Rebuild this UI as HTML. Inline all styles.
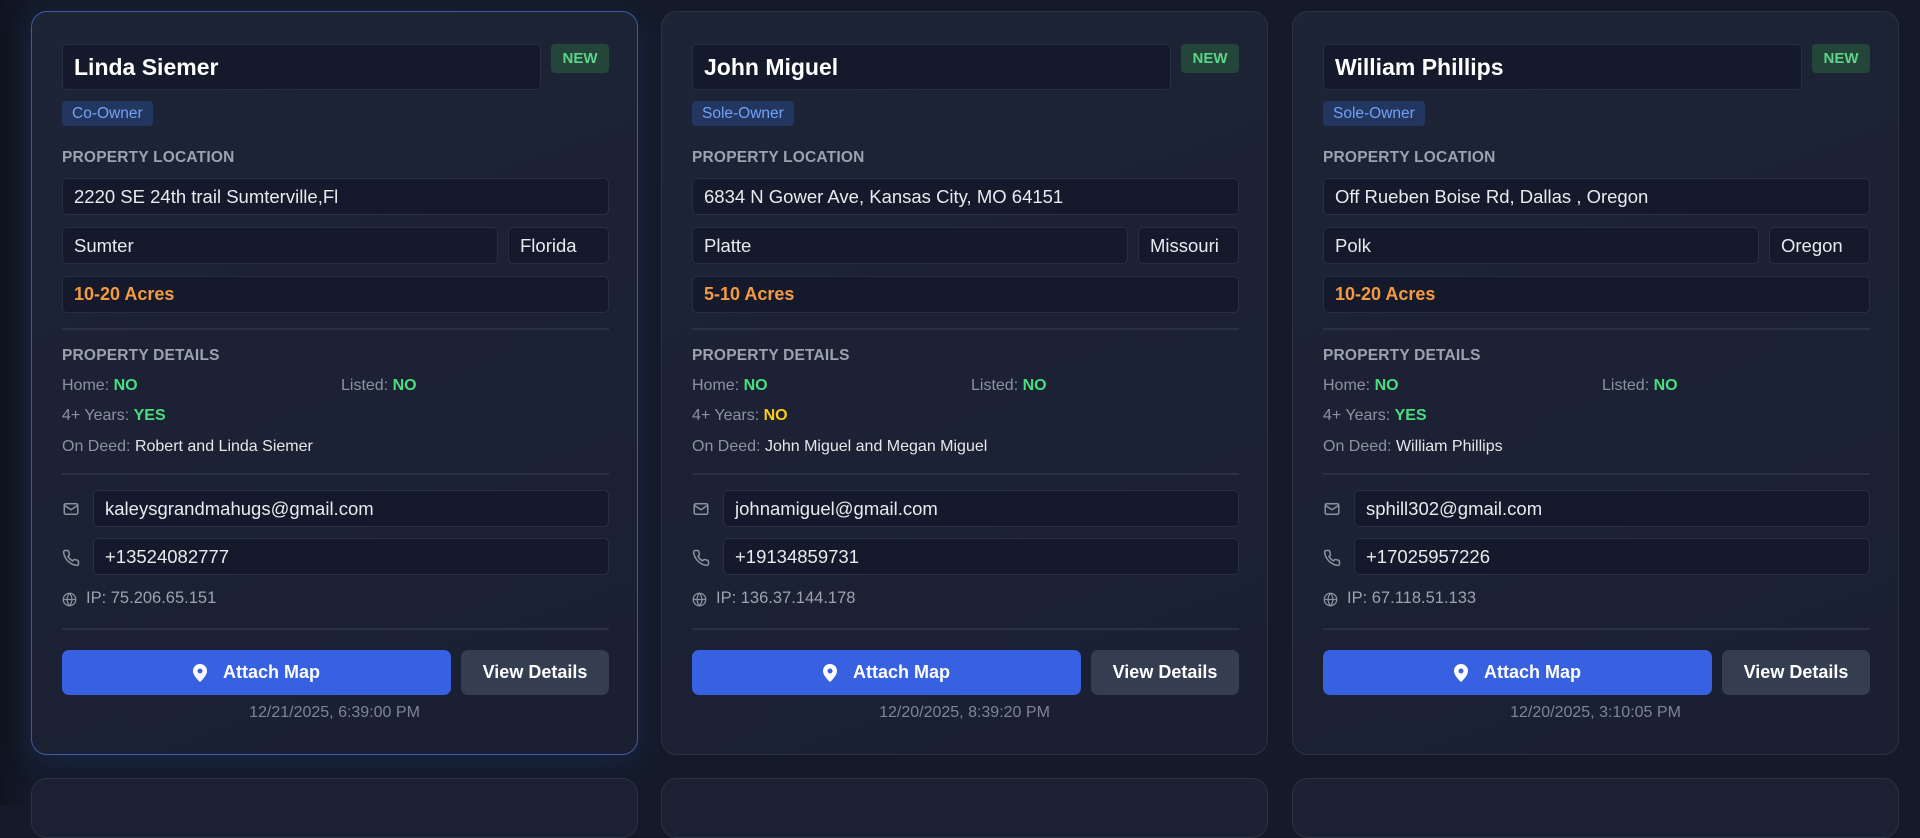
<!DOCTYPE html>
<html><head><meta charset="utf-8"><style>
*{box-sizing:border-box;margin:0;padding:0}
body{width:1920px;height:805px;overflow:hidden;background:#141a28;font-family:"Liberation Sans",sans-serif;color:#e5e7eb;position:relative}
.bgl{position:absolute;left:0;top:0;width:30px;height:805px;background:linear-gradient(90deg,#0f1420,#141a28)}
.card{position:absolute;top:11px;width:607px;height:744px;background:linear-gradient(160deg,#1d2436,#1a2031);border:1px solid #2a3243;border-radius:16px}
.card.sel{border-color:#3d5aa6;box-shadow:0 8px 30px rgba(40,70,150,.25)}
.card2{position:absolute;top:778px;width:607px;height:60px;background:#1b2132;border:1px solid #2a3243;border-radius:16px}
.in{position:absolute;background:#141a2b;border:1px solid #272f40;border-radius:5px;font-size:18.5px;color:#e8eaee;padding-left:11px;display:flex;align-items:center;white-space:nowrap}
.name{left:30px;top:32px;width:479px;height:46px;font-size:23px;font-weight:bold;color:#fff}
.new{position:absolute;left:519px;top:32px;width:58px;height:29px;background:#24463a;color:#5dd28a;font-weight:bold;font-size:15px;border-radius:4px;display:flex;align-items:center;justify-content:center}
.own{position:absolute;left:30px;top:89px;height:25px;padding:0 10px;background:#223660;color:#72a2f5;font-size:15.5px;border-radius:4px;display:flex;align-items:center}
.lbl{position:absolute;left:30px;font-size:15.5px;font-weight:bold;color:#9ca3af;letter-spacing:.2px}
.hr{position:absolute;left:30px;width:547px;height:2px;background:#293142}
.row{position:absolute;font-size:16px;color:#8b93a1}
.row b{color:#4ade80}
.row b.y{color:#facc15}
.row span{color:#e5e7eb}
.ico{position:absolute;left:30px}
.btn{position:absolute;top:638px;height:45px;border-radius:7px;font-weight:bold;font-size:18px;color:#fff;display:flex;align-items:center;justify-content:center}
.ts{position:absolute;left:0;width:605px;top:692px;text-align:center;font-size:16px;color:#7d8594}
</style></head><body>
<div class="bgl"></div>

<div class="card sel" style="left:31px">
<div class="in name">Linda Siemer</div><div class="new">NEW</div>
<div class="own">Co-Owner</div>
<div class="lbl" style="top:137px">PROPERTY LOCATION</div>
<div class="in" style="left:30px;top:166px;width:547px;height:37px">2220 SE 24th trail Sumterville,Fl</div>
<div class="in" style="left:30px;top:215px;width:436px;height:37px">Sumter</div>
<div class="in" style="left:476px;top:215px;width:101px;height:37px">Florida</div>
<div class="in" style="left:30px;top:264px;width:547px;height:37px;color:#f59a40;font-weight:bold;font-size:18px">10-20 Acres</div>
<div class="hr" style="top:316px"></div>
<div class="lbl" style="top:335px">PROPERTY DETAILS</div>
<div class="row" style="left:30px;top:365px">Home: <b>NO</b></div>
<div class="row" style="left:309px;top:365px">Listed: <b>NO</b></div>
<div class="row" style="left:30px;top:395px">4+ Years: <b>YES</b></div>
<div class="row" style="left:30px;top:426px">On Deed: <span>Robert and Linda Siemer</span></div>
<div class="hr" style="top:461px"></div>
<svg class="ico" style="top:488px" width="18" height="18" viewBox="0 0 24 24" fill="none" stroke="#8b93a1" stroke-width="2"><rect x="3" y="5" width="18" height="14" rx="2"/><path d="M3 7l9 6 9-6"/></svg>
<div class="in" style="left:61px;top:478px;width:516px;height:37px">kaleysgrandmahugs@gmail.com</div>
<svg class="ico" style="top:537px" width="18" height="18" viewBox="0 0 24 24" fill="none" stroke="#8b93a1" stroke-width="2"><path d="M22 16.9v3a2 2 0 0 1-2.2 2 19.8 19.8 0 0 1-8.6-3.1 19.5 19.5 0 0 1-6-6A19.8 19.8 0 0 1 2.1 4.2 2 2 0 0 1 4.1 2h3a2 2 0 0 1 2 1.7c.1.9.4 1.8.7 2.7a2 2 0 0 1-.5 2.1L8 9.8a16 16 0 0 0 6 6l1.3-1.3a2 2 0 0 1 2.1-.4c.9.3 1.8.6 2.7.7a2 2 0 0 1 1.7 2z"/></svg>
<div class="in" style="left:61px;top:526px;width:516px;height:37px">+13524082777</div>
<svg class="ico" style="top:580px" width="15" height="15" viewBox="0 0 24 24" fill="none" stroke="#8b93a1" stroke-width="2"><circle cx="12" cy="12" r="10"/><path d="M2 12h20M12 2a15 15 0 0 1 0 20M12 2a15 15 0 0 0 0 20"/></svg>
<div class="row" style="left:54px;top:577px;color:#9ca3af;font-size:16.5px">IP: 75.206.65.151</div>
<div class="hr" style="top:616px"></div>
<div class="btn" style="left:30px;width:389px;background:#3761e0"><svg width="14" height="18" viewBox="0 0 14 18" style="margin-right:16px"><path d="M7 0a7 7 0 0 0-7 7c0 5 7 11 7 11s7-6 7-11a7 7 0 0 0-7-7z" fill="#fff"/><circle cx="7" cy="7" r="2.5" fill="#3761e0"/></svg>Attach Map</div>
<div class="btn" style="left:429px;width:148px;background:#343e50">View Details</div>
<div class="ts">12/21/2025, 6:39:00 PM</div>
</div>

<div class="card" style="left:661px">
<div class="in name">John Miguel</div><div class="new">NEW</div>
<div class="own">Sole-Owner</div>
<div class="lbl" style="top:137px">PROPERTY LOCATION</div>
<div class="in" style="left:30px;top:166px;width:547px;height:37px">6834 N Gower Ave, Kansas City, MO 64151</div>
<div class="in" style="left:30px;top:215px;width:436px;height:37px">Platte</div>
<div class="in" style="left:476px;top:215px;width:101px;height:37px">Missouri</div>
<div class="in" style="left:30px;top:264px;width:547px;height:37px;color:#f59a40;font-weight:bold;font-size:18px">5-10 Acres</div>
<div class="hr" style="top:316px"></div>
<div class="lbl" style="top:335px">PROPERTY DETAILS</div>
<div class="row" style="left:30px;top:365px">Home: <b>NO</b></div>
<div class="row" style="left:309px;top:365px">Listed: <b>NO</b></div>
<div class="row" style="left:30px;top:395px">4+ Years: <b class="y">NO</b></div>
<div class="row" style="left:30px;top:426px">On Deed: <span>John Miguel and Megan Miguel</span></div>
<div class="hr" style="top:461px"></div>
<svg class="ico" style="top:488px" width="18" height="18" viewBox="0 0 24 24" fill="none" stroke="#8b93a1" stroke-width="2"><rect x="3" y="5" width="18" height="14" rx="2"/><path d="M3 7l9 6 9-6"/></svg>
<div class="in" style="left:61px;top:478px;width:516px;height:37px">johnamiguel@gmail.com</div>
<svg class="ico" style="top:537px" width="18" height="18" viewBox="0 0 24 24" fill="none" stroke="#8b93a1" stroke-width="2"><path d="M22 16.9v3a2 2 0 0 1-2.2 2 19.8 19.8 0 0 1-8.6-3.1 19.5 19.5 0 0 1-6-6A19.8 19.8 0 0 1 2.1 4.2 2 2 0 0 1 4.1 2h3a2 2 0 0 1 2 1.7c.1.9.4 1.8.7 2.7a2 2 0 0 1-.5 2.1L8 9.8a16 16 0 0 0 6 6l1.3-1.3a2 2 0 0 1 2.1-.4c.9.3 1.8.6 2.7.7a2 2 0 0 1 1.7 2z"/></svg>
<div class="in" style="left:61px;top:526px;width:516px;height:37px">+19134859731</div>
<svg class="ico" style="top:580px" width="15" height="15" viewBox="0 0 24 24" fill="none" stroke="#8b93a1" stroke-width="2"><circle cx="12" cy="12" r="10"/><path d="M2 12h20M12 2a15 15 0 0 1 0 20M12 2a15 15 0 0 0 0 20"/></svg>
<div class="row" style="left:54px;top:577px;color:#9ca3af;font-size:16.5px">IP: 136.37.144.178</div>
<div class="hr" style="top:616px"></div>
<div class="btn" style="left:30px;width:389px;background:#3761e0"><svg width="14" height="18" viewBox="0 0 14 18" style="margin-right:16px"><path d="M7 0a7 7 0 0 0-7 7c0 5 7 11 7 11s7-6 7-11a7 7 0 0 0-7-7z" fill="#fff"/><circle cx="7" cy="7" r="2.5" fill="#3761e0"/></svg>Attach Map</div>
<div class="btn" style="left:429px;width:148px;background:#343e50">View Details</div>
<div class="ts">12/20/2025, 8:39:20 PM</div>
</div>

<div class="card" style="left:1292px">
<div class="in name">William Phillips</div><div class="new">NEW</div>
<div class="own">Sole-Owner</div>
<div class="lbl" style="top:137px">PROPERTY LOCATION</div>
<div class="in" style="left:30px;top:166px;width:547px;height:37px">Off Rueben Boise Rd, Dallas , Oregon</div>
<div class="in" style="left:30px;top:215px;width:436px;height:37px">Polk</div>
<div class="in" style="left:476px;top:215px;width:101px;height:37px">Oregon</div>
<div class="in" style="left:30px;top:264px;width:547px;height:37px;color:#f59a40;font-weight:bold;font-size:18px">10-20 Acres</div>
<div class="hr" style="top:316px"></div>
<div class="lbl" style="top:335px">PROPERTY DETAILS</div>
<div class="row" style="left:30px;top:365px">Home: <b>NO</b></div>
<div class="row" style="left:309px;top:365px">Listed: <b>NO</b></div>
<div class="row" style="left:30px;top:395px">4+ Years: <b>YES</b></div>
<div class="row" style="left:30px;top:426px">On Deed: <span>William Phillips</span></div>
<div class="hr" style="top:461px"></div>
<svg class="ico" style="top:488px" width="18" height="18" viewBox="0 0 24 24" fill="none" stroke="#8b93a1" stroke-width="2"><rect x="3" y="5" width="18" height="14" rx="2"/><path d="M3 7l9 6 9-6"/></svg>
<div class="in" style="left:61px;top:478px;width:516px;height:37px">sphill302@gmail.com</div>
<svg class="ico" style="top:537px" width="18" height="18" viewBox="0 0 24 24" fill="none" stroke="#8b93a1" stroke-width="2"><path d="M22 16.9v3a2 2 0 0 1-2.2 2 19.8 19.8 0 0 1-8.6-3.1 19.5 19.5 0 0 1-6-6A19.8 19.8 0 0 1 2.1 4.2 2 2 0 0 1 4.1 2h3a2 2 0 0 1 2 1.7c.1.9.4 1.8.7 2.7a2 2 0 0 1-.5 2.1L8 9.8a16 16 0 0 0 6 6l1.3-1.3a2 2 0 0 1 2.1-.4c.9.3 1.8.6 2.7.7a2 2 0 0 1 1.7 2z"/></svg>
<div class="in" style="left:61px;top:526px;width:516px;height:37px">+17025957226</div>
<svg class="ico" style="top:580px" width="15" height="15" viewBox="0 0 24 24" fill="none" stroke="#8b93a1" stroke-width="2"><circle cx="12" cy="12" r="10"/><path d="M2 12h20M12 2a15 15 0 0 1 0 20M12 2a15 15 0 0 0 0 20"/></svg>
<div class="row" style="left:54px;top:577px;color:#9ca3af;font-size:16.5px">IP: 67.118.51.133</div>
<div class="hr" style="top:616px"></div>
<div class="btn" style="left:30px;width:389px;background:#3761e0"><svg width="14" height="18" viewBox="0 0 14 18" style="margin-right:16px"><path d="M7 0a7 7 0 0 0-7 7c0 5 7 11 7 11s7-6 7-11a7 7 0 0 0-7-7z" fill="#fff"/><circle cx="7" cy="7" r="2.5" fill="#3761e0"/></svg>Attach Map</div>
<div class="btn" style="left:429px;width:148px;background:#343e50">View Details</div>
<div class="ts">12/20/2025, 3:10:05 PM</div>
</div>

<div class="card2" style="left:31px"></div>
<div class="card2" style="left:661px"></div>
<div class="card2" style="left:1292px"></div>
</body></html>
